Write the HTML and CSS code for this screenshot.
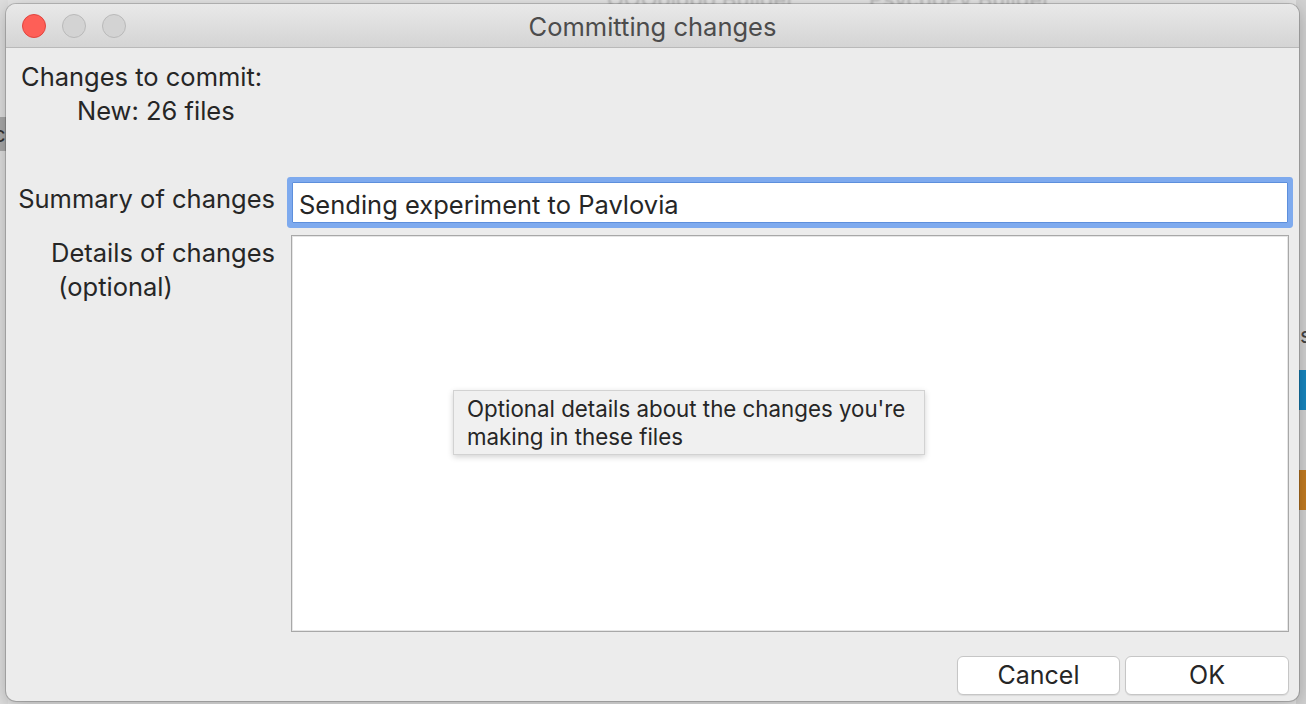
FILE: index.html
```html
<!DOCTYPE html>
<html>
<head>
<meta charset="utf-8">
<link rel="stylesheet" href="styles.css">
</head>
<body>
<div class="desk">
  <div class="ghost-title">OOOolobo Builder &nbsp;&nbsp;&nbsp;&nbsp;&nbsp;&nbsp;&nbsp;&nbsp;&nbsp;&nbsp; PsychoPy Builder</div>
  <div class="left-strip"><span class="left-block">c</span></div>
  <div class="right-strip">
    <span class="rs-text">s</span>
    <span class="rs-blue"></span>
    <span class="rs-orange"></span>
  </div>
  <div class="window">
    <div class="titlebar">
      <div class="lights">
        <span class="light red"></span>
        <span class="light"></span>
        <span class="light"></span>
      </div>
      <div class="title">Committing changes</div>
    </div>
    <div class="content">
      <div class="summary">
        <div class="line">Changes to commit:</div>
        <div class="line indent">New: 26 files</div>
      </div>
      <div class="form">
        <div class="label label-summary">Summary of changes</div>
        <div class="field"><div class="input">Sending experiment to Pavlovia</div></div>
        <div class="label label-details"><div class="label-inner">Details of changes<br>&nbsp;(optional)</div></div>
        <div class="field"><div class="textarea">
          <div class="tooltip">Optional details about the changes you're<br>making in these files</div>
        </div></div>
      </div>
      <div class="buttons">
        <div class="btn btn-cancel">Cancel</div>
        <div class="btn btn-ok">OK</div>
      </div>
    </div>
  </div>
</div>
</body>
</html>
```

FILE: styles.css
```css
* { box-sizing: border-box; }
html, body {
  margin: 0;
  padding: 0;
  width: 1306px;
  height: 704px;
  overflow: hidden;
}
body {
  background: #dcdcdc;
  font-family: "Inter", "Helvetica Neue", "Liberation Sans", sans-serif;
  color: #262626;
}
.desk {
  position: relative;
  width: 1306px;
  height: 704px;
  overflow: hidden;
  background: #e4e4e4;
}
.ghost-title {
  position: absolute;
  left: 607px;
  top: -14px;
  font-size: 22px;
  color: #b4b4b4;
  filter: blur(1px);
  white-space: nowrap;
}
.left-strip {
  position: absolute;
  left: 0;
  top: 0;
  width: 8px;
  height: 704px;
  background: #dedede;
}
.left-block {
  position: absolute;
  left: 0;
  top: 117px;
  width: 8px;
  height: 34px;
  background: #a9a9a9;
  font-size: 22px;
  line-height: 34px;
  color: #333;
  text-indent: -7px;
  overflow: hidden;
}
.right-strip {
  position: absolute;
  right: 0;
  top: 0;
  width: 10px;
  height: 704px;
  background: #d2d2d2;
}
.rs-text {
  position: absolute;
  left: 4px;
  top: 322px;
  font-size: 22px;
  color: #444;
}
.rs-blue {
  position: absolute;
  left: 3px;
  top: 370px;
  width: 8px;
  height: 40px;
  background: #1786c0;
}
.rs-orange {
  position: absolute;
  left: 3px;
  top: 470px;
  width: 8px;
  height: 40px;
  background: #c47c22;
}

.window {
  position: absolute;
  left: 6px;
  top: 4px;
  width: 1293px;
  height: 697px;
  background: #ececec;
  border-radius: 10px;
  box-shadow: 0 0 0 1px rgba(0,0,0,0.18), 0 4px 18px rgba(0,0,0,0.25);
  overflow: hidden;
}
.titlebar {
  position: relative;
  height: 44px;
  background: linear-gradient(#e9e9e9, #d4d4d4);
  border-bottom: 1px solid #b9b9b9;
  display: flex;
  align-items: center;
  justify-content: center;
}
.lights {
  position: absolute;
  left: 16px;
  top: 10px;
  display: flex;
  gap: 16px;
}
.light {
  width: 24px;
  height: 24px;
  border-radius: 50%;
  background: #d3d3d3;
  border: 1px solid #b9b9b9;
}
.light.red {
  background: #fe5f57;
  border-color: #e0443e;
}
.title {
  font-size: 25.5px;
  color: #4c4c4c;
  margin-top: 2px;
}

.content {
  padding: 12px 10px 0 15px;
}
.summary {
  font-size: 25.5px;
  line-height: 34px;
}
.indent {
  padding-left: 56px;
}

.form {
  margin-top: 49px;
  display: grid;
  grid-template-columns: 254px 998px;
  column-gap: 16px;
  row-gap: 12px;
}
.label {
  font-size: 25.5px;
  line-height: 34px;
  display: flex;
  justify-content: flex-end;
  white-space: nowrap;
}
.label-summary {
  padding-top: 5px;
}
.label-details {
  padding-top: 1px;
}
.label-inner {
  text-align: left;
}
.field {
  display: flex;
}
.input {
  width: 996px;
  height: 41px;
  margin: 5px 1px 0 1px;
  background: #fff;
  border: 1px solid #5d8fdc;
  box-shadow: 0 0 0 5px #7eaaee;
  border-radius: 1px;
  font-size: 25.5px;
  line-height: 39px;
  padding: 2px 0 0 6px;
  color: #262626;
  white-space: nowrap;
}
.textarea {
  position: relative;
  width: 998px;
  height: 397px;
  background: #fff;
  border: 1px solid #a8a8a8;
  box-shadow: inset 0 0 0 1px #e6e6e6;
}
.tooltip {
  position: absolute;
  left: 161px;
  top: 154px;
  width: 472px;
  height: 65px;
  background: #f0f0f0;
  border: 1px solid #d2d2d2;
  box-shadow: 0 2px 6px rgba(0,0,0,0.18);
  font-size: 22.3px;
  line-height: 28px;
  padding: 4px 0 0 13px;
  color: #262626;
  white-space: nowrap;
}

.buttons {
  margin-top: 24px;
  display: flex;
  justify-content: flex-end;
  gap: 5px;
  padding-right: 0;
}
.btn {
  height: 39px;
  background: #fff;
  border: 1px solid #c6c6c6;
  border-radius: 6px;
  box-shadow: 0 1px 1px rgba(0,0,0,0.08);
  font-size: 25px;
  line-height: 37px;
  text-align: center;
  color: #262626;
}
.btn-cancel { width: 163px; }
.btn-ok { width: 164px; }
```
